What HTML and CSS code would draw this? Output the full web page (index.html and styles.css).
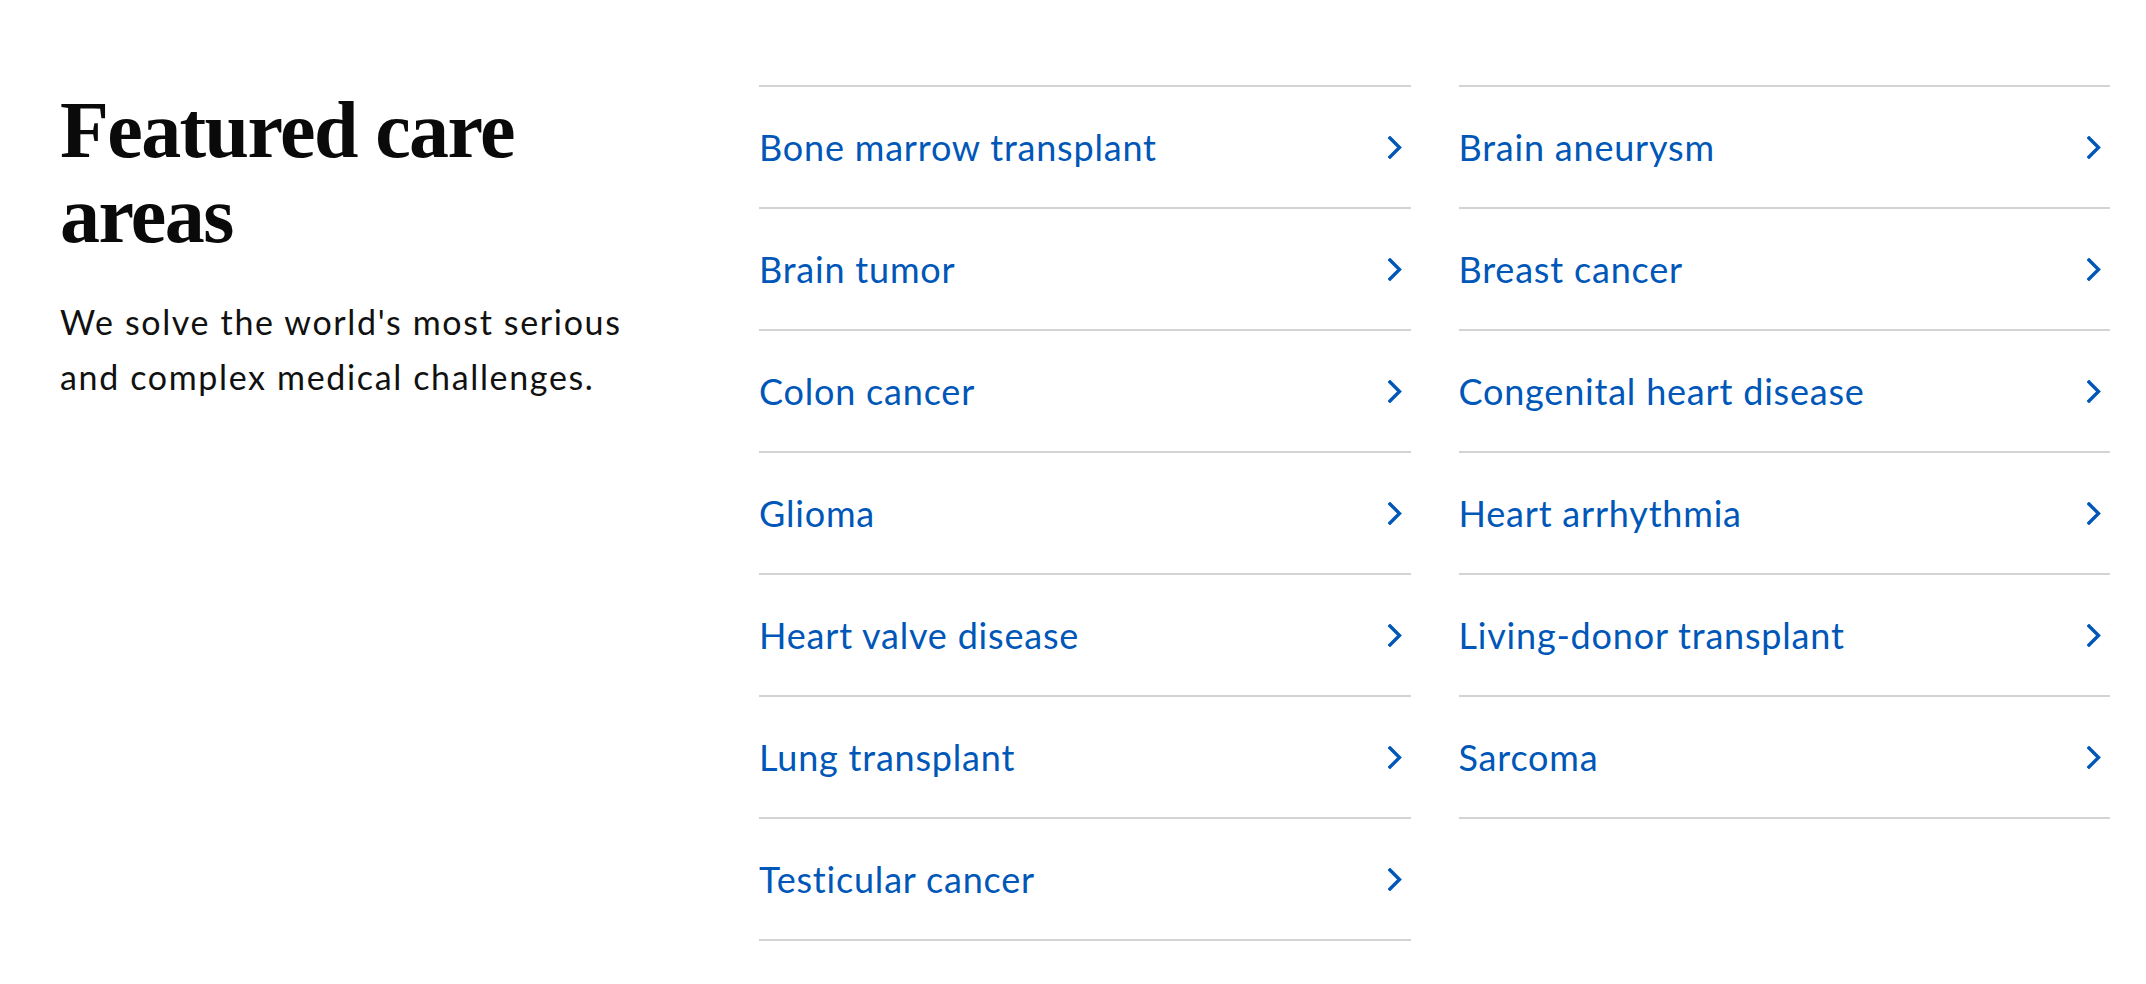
FILE: index.html
```html
<!DOCTYPE html>
<html lang="en">
<head>
<meta charset="utf-8">
<title>Featured care areas</title>
<link rel="stylesheet" href="styles.css">
</head>
<body>
<section class="featured">
  <div class="intro">
    <h2 class="title">Featured care areas</h2>
    <p class="lede">We solve the world's most serious and complex medical challenges.</p>
  </div>
  <div class="lists">
    <ul class="care-list">
      <li><a class="care-link" href="#"><span>Bone marrow transplant</span><svg class="chev" viewBox="0 0 14 23" width="14" height="23"><polyline points="2,2 11.5,11.5 2,21"/></svg></a></li>
      <li><a class="care-link" href="#"><span>Brain tumor</span><svg class="chev" viewBox="0 0 14 23" width="14" height="23"><polyline points="2,2 11.5,11.5 2,21"/></svg></a></li>
      <li><a class="care-link" href="#"><span>Colon cancer</span><svg class="chev" viewBox="0 0 14 23" width="14" height="23"><polyline points="2,2 11.5,11.5 2,21"/></svg></a></li>
      <li><a class="care-link" href="#"><span>Glioma</span><svg class="chev" viewBox="0 0 14 23" width="14" height="23"><polyline points="2,2 11.5,11.5 2,21"/></svg></a></li>
      <li><a class="care-link" href="#"><span>Heart valve disease</span><svg class="chev" viewBox="0 0 14 23" width="14" height="23"><polyline points="2,2 11.5,11.5 2,21"/></svg></a></li>
      <li><a class="care-link" href="#"><span>Lung transplant</span><svg class="chev" viewBox="0 0 14 23" width="14" height="23"><polyline points="2,2 11.5,11.5 2,21"/></svg></a></li>
      <li><a class="care-link" href="#"><span>Testicular cancer</span><svg class="chev" viewBox="0 0 14 23" width="14" height="23"><polyline points="2,2 11.5,11.5 2,21"/></svg></a></li>
    </ul>
    <ul class="care-list">
      <li><a class="care-link" href="#"><span>Brain aneurysm</span><svg class="chev" viewBox="0 0 14 23" width="14" height="23"><polyline points="2,2 11.5,11.5 2,21"/></svg></a></li>
      <li><a class="care-link" href="#"><span>Breast cancer</span><svg class="chev" viewBox="0 0 14 23" width="14" height="23"><polyline points="2,2 11.5,11.5 2,21"/></svg></a></li>
      <li><a class="care-link" href="#"><span>Congenital heart disease</span><svg class="chev" viewBox="0 0 14 23" width="14" height="23"><polyline points="2,2 11.5,11.5 2,21"/></svg></a></li>
      <li><a class="care-link" href="#"><span>Heart arrhythmia</span><svg class="chev" viewBox="0 0 14 23" width="14" height="23"><polyline points="2,2 11.5,11.5 2,21"/></svg></a></li>
      <li><a class="care-link" href="#"><span>Living-donor transplant</span><svg class="chev" viewBox="0 0 14 23" width="14" height="23"><polyline points="2,2 11.5,11.5 2,21"/></svg></a></li>
      <li><a class="care-link" href="#"><span>Sarcoma</span><svg class="chev" viewBox="0 0 14 23" width="14" height="23"><polyline points="2,2 11.5,11.5 2,21"/></svg></a></li>
    </ul>
  </div>
</section>
</body>
</html>
```

FILE: styles.css
```css
html, body {
  margin: 0;
  padding: 0;
  background: #ffffff;
}

body {
  font-family: Lato, "Open Sans", "Liberation Sans", sans-serif;
  color: #111111;
}

.featured {
  display: grid;
  grid-template-columns: 651px 1fr;
  column-gap: 48px;
  padding: 85px 36px 40px 60px;
}

.intro {
  padding-top: 3px;
  max-width: 600px;
}

.title {
  margin: 0;
  font-family: "Liberation Serif", "DejaVu Serif", serif;
  font-weight: 700;
  font-size: 80px;
  line-height: 85px;
  letter-spacing: -1.6px;
  color: #0a0a0a;
}

.lede {
  margin: 36px 0 0;
  font-size: 34px;
  line-height: 55px;
  letter-spacing: 1.65px;
  color: #111111;
}

.lists {
  display: grid;
  grid-template-columns: 1fr 1fr;
  column-gap: 48px;
  align-items: start;
}

.care-list {
  list-style: none;
  margin: 0;
  padding: 0;
  border-bottom: 2px solid #d3d3d3;
}

.care-list li {
  border-top: 2px solid #d3d3d3;
}

.care-link {
  display: flex;
  align-items: center;
  justify-content: space-between;
  height: 120px;
  padding-right: 9px;
  color: #0057b8;
  text-decoration: none;
  font-size: 36px;
  letter-spacing: 0.8px;
}

.chev {
  flex: none;
  fill: none;
  stroke: #0057b8;
  stroke-width: 3.4;
  stroke-linecap: square;
}
```
